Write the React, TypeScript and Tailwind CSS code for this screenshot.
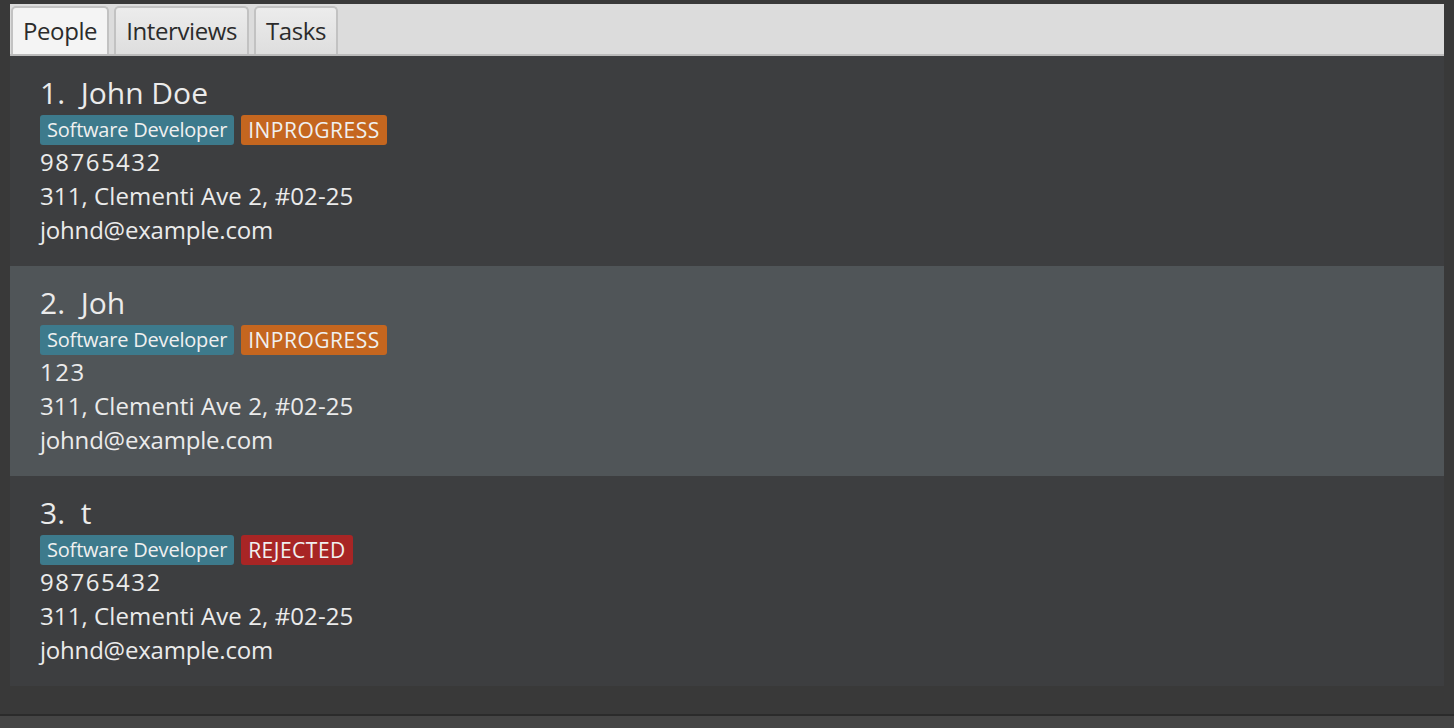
const PEOPLE = [
  { n: 1, name: "John Doe", phone: "98765432", status: "INPROGRESS" },
  { n: 2, name: "Joh", phone: "123", status: "INPROGRESS" },
  { n: 3, name: "t", phone: "98765432", status: "REJECTED" },
];

const STATUS_CLASS: Record<string, string> = {
  INPROGRESS: "bg-[#c5661f]",
  REJECTED: "bg-[#a82525]",
};

const TABS = ["People", "Interviews", "Tasks"];

export default function App() {
  return (
    <div className="w-[1454px] h-[728px] bg-[#393939] flex flex-col overflow-hidden" style={{ fontFamily: "'Open Sans', 'Noto Sans', sans-serif" }}>
      <div className="flex-1 pt-[4px] px-[10px]">
        {/* Tab strip */}
        <div className="h-[52px] bg-[#dcdcdc] border-b-2 border-[#bbbbbb] flex items-end gap-[5px] pl-[1px]">
          {TABS.map((t, i) => (
            <div
              key={t}
              className={`h-[48px] px-[10px] flex items-center rounded-t-[5px] border-2 border-b-0 border-[#c2c2c2] text-[24px] text-[#2b2b2b] tracking-[-0.4px] ${
                i === 0 ? "bg-[#f4f4f4]" : "bg-gradient-to-b from-[#ececec] to-[#dedede]"
              }`}
            >
              {t}
            </div>
          ))}
        </div>

        {/* People list */}
        <div className="bg-[#3d3e40]">
          {PEOPLE.map((p, i) => (
            <div key={p.n} className={`h-[210px] pl-[30px] pt-[19px] text-[#ebebeb] ${i === 1 ? "bg-[#505558]" : ""}`}>
              <div className="text-[30px] leading-[36px]">
                {p.n}.&nbsp; {p.name}
              </div>
              <div className="flex gap-[7px] mt-[4px]">
                <span className="h-[30px] px-[7px] rounded-[3px] bg-[#3d7a8c] text-[20px] leading-[30px] text-[#f0f0f0] tracking-[-0.2px]">
                  Software Developer
                </span>
                <span className={`h-[30px] px-[7px] rounded-[3px] text-[21px] leading-[30px] text-[#f0f0f0] tracking-[0.5px] ${STATUS_CLASS[p.status]}`}>
                  {p.status}
                </span>
              </div>
              <div className="text-[24px] leading-[34px] tracking-[1.5px]">{p.phone}</div>
              <div className="text-[24px] leading-[34px] tracking-[0.1px]">311, Clementi Ave 2, #02-25</div>
              <div className="text-[24px] leading-[34px] tracking-[-0.2px]">johnd@example.com</div>
            </div>
          ))}
        </div>
      </div>
      <div className="h-[2px] bg-[#2b2b2b]" />
      <div className="h-[12px] bg-[#454545]" />
    </div>
  );
}
